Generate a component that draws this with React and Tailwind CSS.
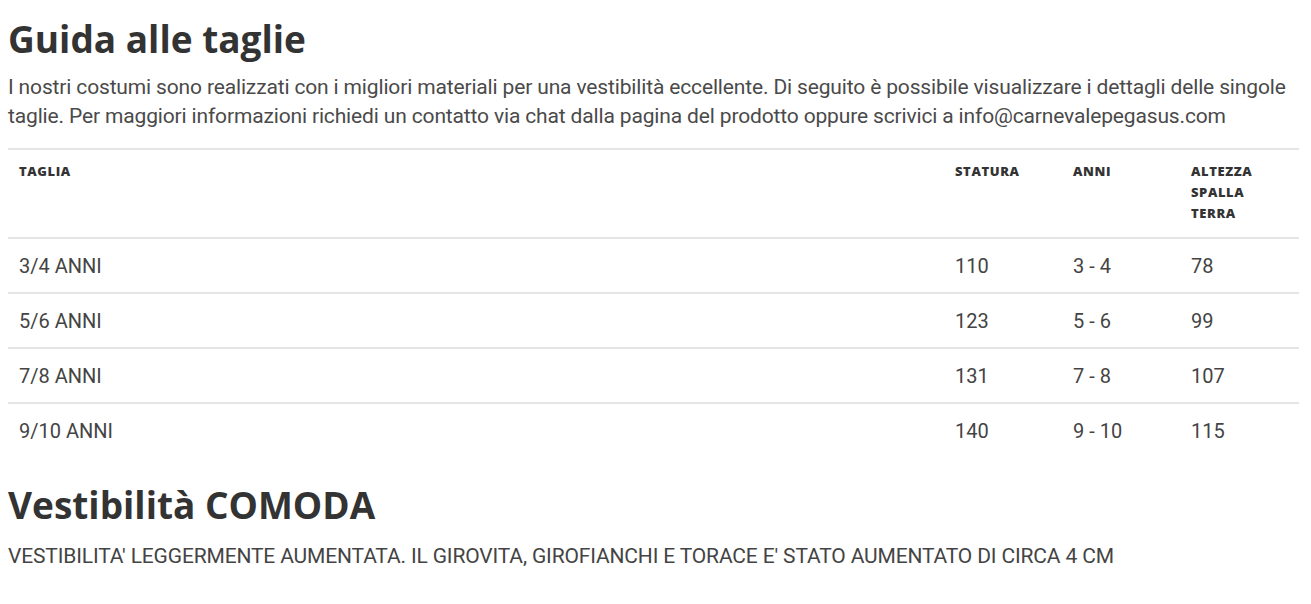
import React from 'react';

const rows = [
  { taglia: '3/4 ANNI', statura: '110', anni: '3 - 4', altezza: '78' },
  { taglia: '5/6 ANNI', statura: '123', anni: '5 - 6', altezza: '99' },
  { taglia: '7/8 ANNI', statura: '131', anni: '7 - 8', altezza: '107' },
  { taglia: '9/10 ANNI', statura: '140', anni: '9 - 10', altezza: '115' },
];

const heading = { fontFamily: '"Open Sans", "Liberation Sans", sans-serif' };

export default function App() {
  return (
    <div className="min-h-screen bg-white px-2 pt-[17px] text-[#333]" style={{ fontFamily: 'Roboto, "Liberation Sans", sans-serif' }}>
      {/* Guida */}
      <h1 className="text-[37px] font-bold leading-[44px] text-[#333]" style={heading}>
        Guida alle taglie
      </h1>
      <p className="mt-[12px] text-[21px] leading-[29px] tracking-[-0.15px] text-[#4a4a4a]">
        I nostri costumi sono realizzati con i migliori materiali per una vestibilità eccellente. Di seguito è possibile visualizzare i dettagli delle singole taglie. Per maggiori informazioni richiedi un contatto via chat dalla pagina del prodotto oppure scrivici a info@carnevalepegasus.com
      </p>

      <table className="mt-[17px] w-[1291px] border-collapse text-left">
        <thead>
          <tr className="border-t-2 border-b-2 border-[#e5e5e5]">
            <th className="w-[936px] px-[11px] pt-[11px] pb-[13px] align-top text-[13px] font-extrabold leading-[21px] tracking-[0.6px] text-[#333]" style={heading}>TAGLIA</th>
            <th className="w-[118px] px-[11px] pt-[11px] pb-[13px] align-top text-[13px] font-extrabold leading-[21px] tracking-[0.6px] text-[#333]" style={heading}>STATURA</th>
            <th className="w-[118px] px-[11px] pt-[11px] pb-[13px] align-top text-[13px] font-extrabold leading-[21px] tracking-[0.6px] text-[#333]" style={heading}>ANNI</th>
            <th className="px-[11px] pt-[11px] pb-[13px] align-top text-[13px] font-extrabold leading-[21px] tracking-[0.6px] text-[#333]" style={heading}>
              ALTEZZA<br />SPALLA<br />TERRA
            </th>
          </tr>
        </thead>
        <tbody>
          {rows.map((r, i) => (
            <tr key={i} className={i < rows.length - 1 ? 'border-b-2 border-[#e5e5e5]' : ''}>
              <td className="h-[55px] px-[11px] text-[20px] text-[#444]">{r.taglia}</td>
              <td className="px-[11px] text-[20px] text-[#444]">{r.statura}</td>
              <td className="px-[11px] text-[20px] text-[#444]">{r.anni}</td>
              <td className="px-[11px] text-[20px] text-[#444]">{r.altezza}</td>
            </tr>
          ))}
        </tbody>
      </table>

      {/* Vestibilità */}
      <h2 className="mt-[25px] text-[37px] font-bold leading-[44px] text-[#333]" style={heading}>
        Vestibilità COMODA
      </h2>
      <p className="mt-[15px] text-[21px] leading-[28px] tracking-[-0.15px] text-[#444]">
        VESTIBILITA' LEGGERMENTE AUMENTATA. IL GIROVITA, GIROFIANCHI E TORACE E' STATO AUMENTATO DI CIRCA 4 CM
      </p>
    </div>
  );
}
